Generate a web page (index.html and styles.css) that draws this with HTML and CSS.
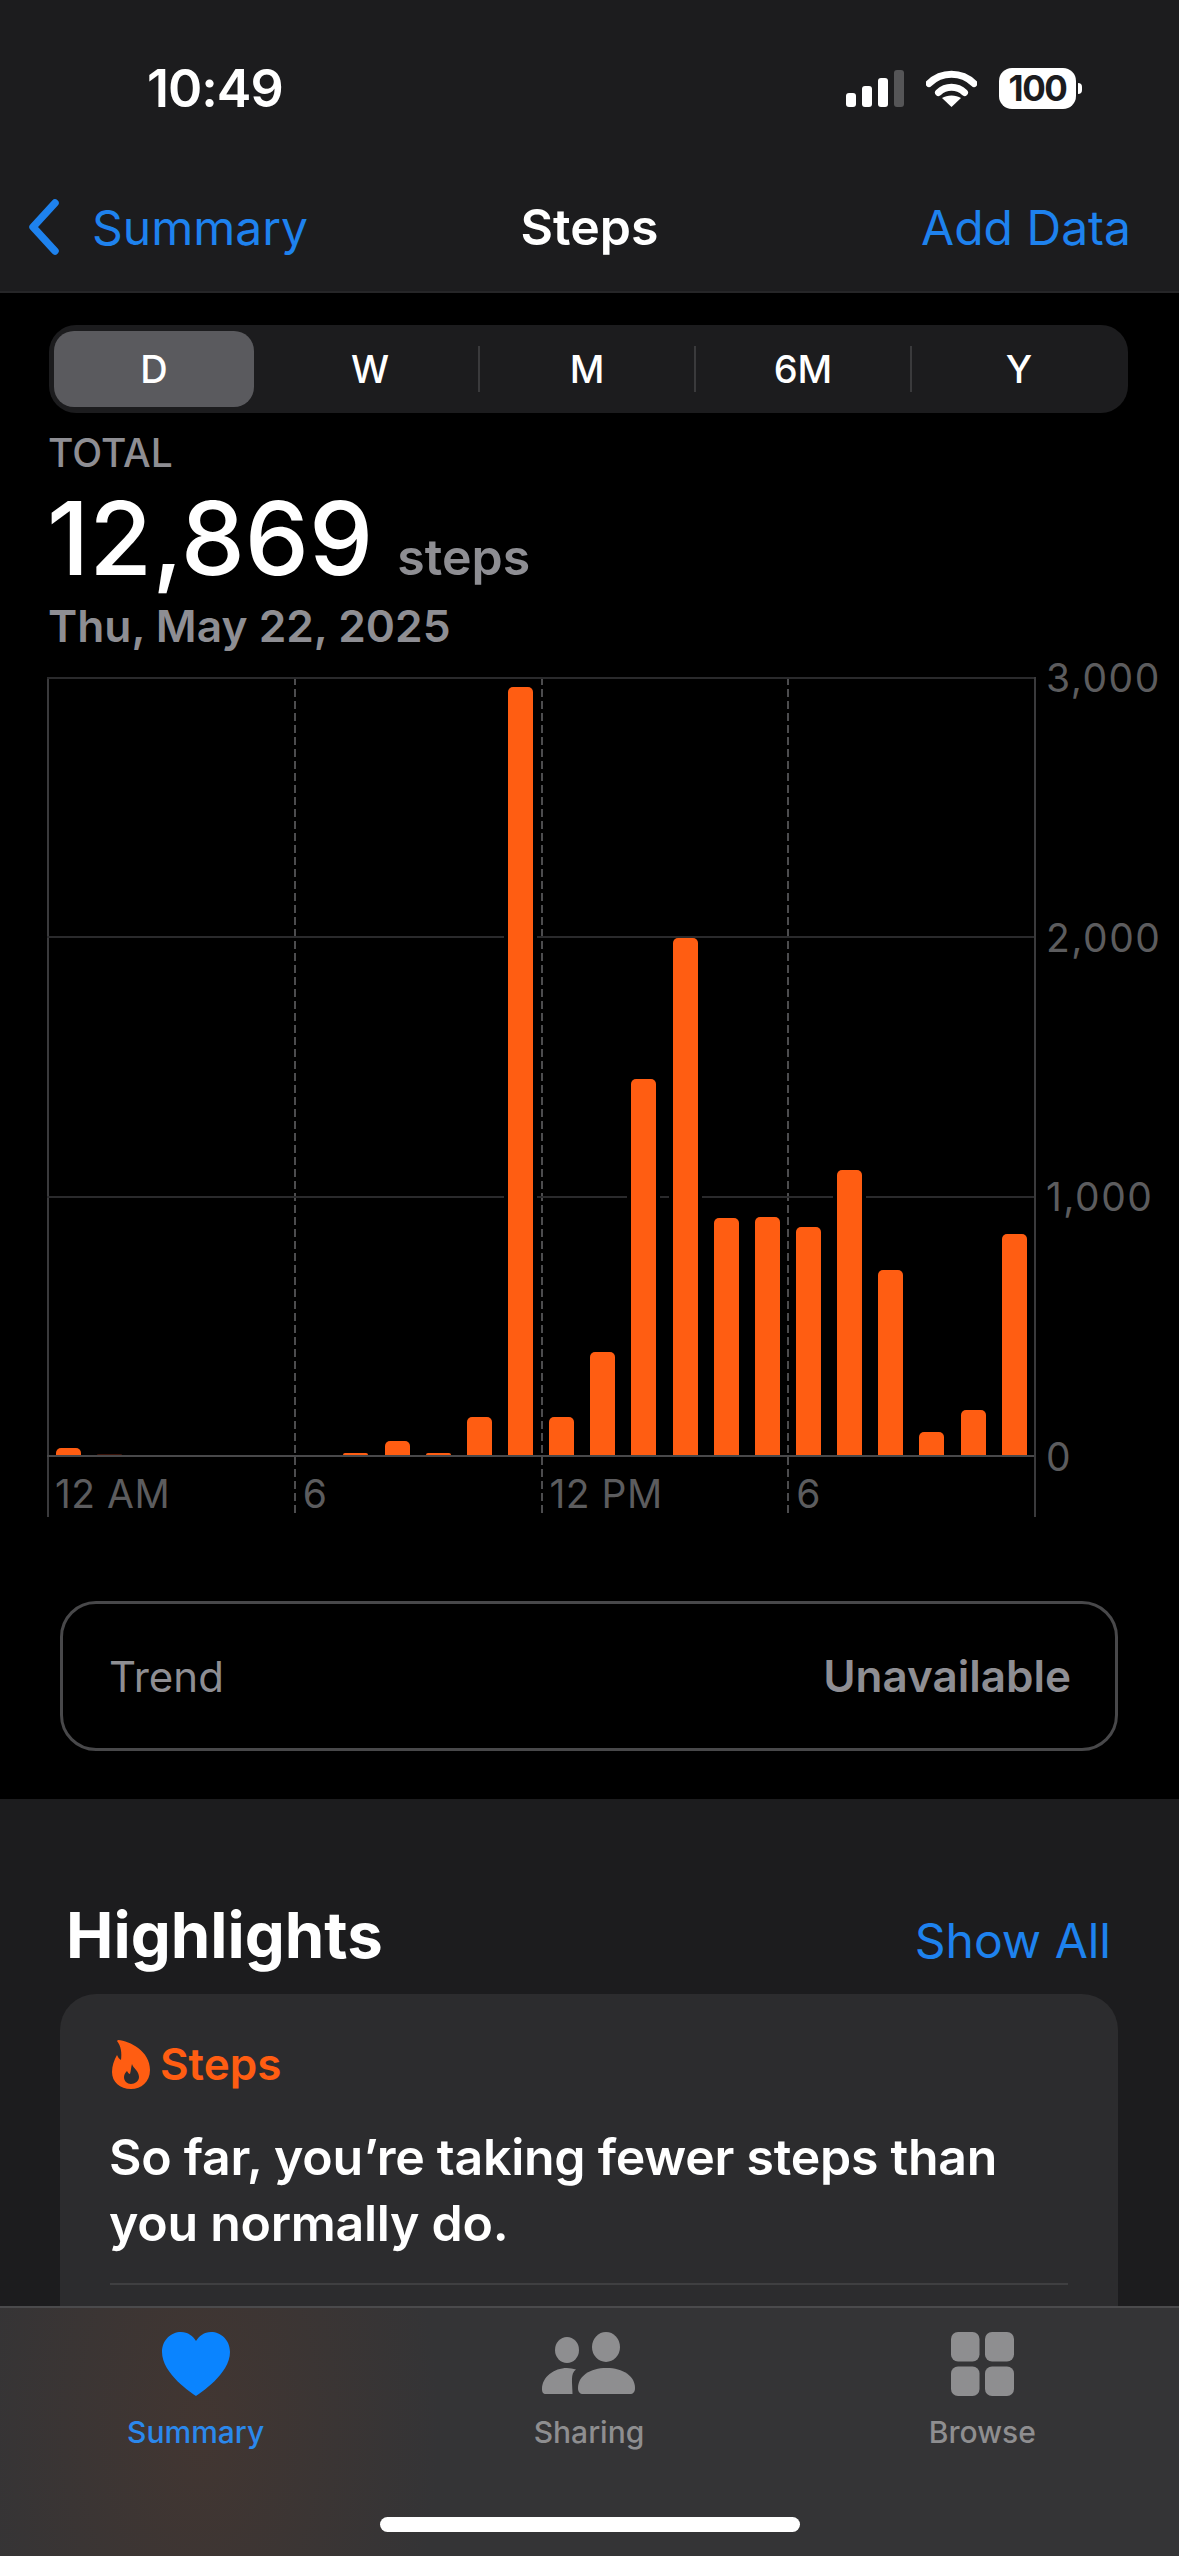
FILE: index.html
```html
<!DOCTYPE html>
<html lang="en">

<head>
  <meta charset="UTF-8">
  <meta name="viewport" content="width=device-width, initial-scale=1.0">
  <title>Steps</title>

  <link rel="stylesheet" href="styles.css">
</head>

<body>

  <div class="phone">

    <header class="header">
      <div class="statusbar">
        <span class="time">10:49</span>
        <div class="status-icons">
          <div class="signal">
            <i class="s1"></i><i class="s2"></i><i class="s3"></i><i class="s4"></i>
          </div>
          <svg class="wifi" width="51" height="37" viewBox="0 0 51 37">
            <path d="M3 13.5A32 32 0 0 1 48 13.5" fill="none" stroke="#fff" stroke-width="7" stroke-linecap="round" />
            <path d="M12.5 22.5A19 19 0 0 1 38.500 22.500" fill="none" stroke="#fff" stroke-width="7" stroke-linecap="round" />
            <path d="M25.500 37L16 28C21 24.500 30 24.500 35 28Z" fill="#fff" />
          </svg>
          <div class="battery">
            <span class="battery-level">100</span>
            <i class="battery-nub"></i>
          </div>
        </div>
      </div>
      <nav class="navbar">
        <a class="back">
          <svg width="32" height="58" viewBox="0 0 32 58">
            <path d="M27 5L5 29L27 53" fill="none" stroke="#1e82ee" stroke-width="7.500" stroke-linecap="round" stroke-linejoin="round" />
          </svg>
          <span>Summary</span>
        </a>
        <h1 class="nav-title">Steps</h1>
        <a class="nav-action">Add Data</a>
      </nav>
    </header>

    <main class="detail">
      <div class="segments">
        <div class="segment active">D</div>
        <div class="segment">W</div>
        <div class="segment split">M</div>
        <div class="segment split">6M</div>
        <div class="segment split">Y</div>
      </div>

      <div class="total-label">TOTAL</div>
      <div class="total">
        <span class="total-value">12,869</span>
        <span class="total-unit">steps</span>
      </div>
      <div class="total-date">Thu, May 22, 2025</div>

      <div class="chart">
        <div class="plot">
          <div class="columns">
            <div class="column first">12 AM</div>
            <div class="column">6</div>
            <div class="column">12 PM</div>
            <div class="column">6</div>
          </div>
          <div class="rows">
            <div class="row"></div>
            <div class="row"></div>
            <div class="row"></div>
          </div>
          <div class="bars">
            <div class="bar" style="height:7px"></div>
            <div class="bar faint" style="height:1px"></div>
            <div class="bar empty"></div>
            <div class="bar empty"></div>
            <div class="bar empty"></div>
            <div class="bar empty"></div>
            <div class="bar empty"></div>
            <div class="bar" style="height:2px"></div>
            <div class="bar" style="height:14px"></div>
            <div class="bar" style="height:2px"></div>
            <div class="bar" style="height:38px"></div>
            <div class="bar" style="height:768px"></div>
            <div class="bar" style="height:38px"></div>
            <div class="bar" style="height:103px"></div>
            <div class="bar" style="height:376px"></div>
            <div class="bar" style="height:517px"></div>
            <div class="bar" style="height:237px"></div>
            <div class="bar" style="height:238px"></div>
            <div class="bar" style="height:228px"></div>
            <div class="bar" style="height:285px"></div>
            <div class="bar" style="height:185px"></div>
            <div class="bar" style="height:23px"></div>
            <div class="bar" style="height:45px"></div>
            <div class="bar" style="height:221px"></div>
          </div>
        </div>
        <div class="y-axis">
          <span>3,000</span>
          <span>2,000</span>
          <span>1,000</span>
          <span>0</span>
        </div>
      </div>

      <div class="trend">
        <span class="trend-label">Trend</span>
        <span class="trend-value">Unavailable</span>
      </div>
    </main>

    <section class="highlights">
      <div class="highlights-head">
        <h2>Highlights</h2>
        <a class="show-all">Show All</a>
      </div>
      <div class="card">
        <div class="card-title">
          <svg width="38" height="49" viewBox="0 0 38 49">
            <path fill="#ff5d12" fill-rule="evenodd" d="M6 0C18 1 38 11 38 30C38 42 29 49 19 49C8 49 0 42 0 32C0 26 2 20 5 15C6 17 7 19 9 20C10 13 9 6 5 1ZM20 24C21 28 27 31 27 37C27 41 23 44 19 44C15 44 12 41 12 37C12 34 14 32 15 31C16 33 17 34 18 34C19 31 19 27 20 24Z" />
          </svg>
          <span>Steps</span>
        </div>
        <p class="card-text">So far, you’re taking fewer steps than you normally do.</p>
        <div class="card-line"></div>
      </div>
    </section>

    <footer class="tabbar">
      <div class="tabs">
        <div class="tab active">
          <svg width="68" height="64" viewBox="0 0 68 64">
            <path fill="#0a84ff" d="M34 64C30 61 0 42 0 20C0 8 9 0 19 0C26 0 31 4 34 9C37 4 42 0 49 0C59 0 68 8 68 20C68 42 38 61 34 64Z" />
          </svg>
          <span>Summary</span>
        </div>
        <div class="tab">
          <svg width="93" height="64" viewBox="0 0 93 64">
            <g fill="#8e8e90">
              <ellipse cx="64" cy="15" rx="14" ry="15" />
              <ellipse cx="25" cy="18" rx="12" ry="13" />
              <path d="M36 56C36 44 48 36 64.500 36C81 36 93 44 93 56C93 60 91 62 88 62H41C38 62 36 60 36 56Z" />
              <path d="M0 57C0 45 12 36 25 36C28 36 31 36.500 34 37.500C28 42 30.500 50 30.500 62H4C1 62 0 60 0 57Z" />
            </g>
          </svg>
          <span>Sharing</span>
        </div>
        <div class="tab">
          <svg width="63" height="64" viewBox="0 0 63 64">
            <g fill="#8e8e90">
              <rect x="0" y="0" width="28.500" height="29.500" rx="7" />
              <rect x="34" y="0" width="29" height="29.500" rx="7" />
              <rect x="0" y="34.500" width="28.500" height="29.500" rx="7" />
              <rect x="34" y="34.500" width="29" height="29.500" rx="7" />
            </g>
          </svg>
          <span>Browse</span>
        </div>
      </div>
      <div class="home-indicator"></div>
    </footer>

  </div>

</body>

</html>
```

FILE: styles.css
```css
* {
  box-sizing: border-box;
}

body {
  margin: 0;
  background-color: #000;
  color: #fff;
  font-family: Inter, "Noto Sans", sans-serif;
}

h1,
h2,
p {
  margin: 0;
}

.phone {
  position: relative;
  width: 1179px;
  height: 2556px;
  overflow: hidden;
}

/* top bars */
.header {
  height: 293px;
  background-color: #1c1c1e;
  border-bottom: 2px solid #262628;
}

.statusbar {
  display: flex;
  justify-content: space-between;
  align-items: center;
  height: 176px;
  padding: 0 97px 0 147px;
}

.time {
  font-size: 52px;
  font-weight: 600;
  letter-spacing: -1px;
}

.status-icons {
  display: flex;
  align-items: center;
  gap: 22px;
}

.signal {
  display: flex;
  align-items: flex-end;
  gap: 6px;
  height: 37px;
}

.signal i {
  width: 10px;
  border-radius: 3px;
  background-color: #fff;
}

.signal .s1 {
  height: 14px;
}

.signal .s2 {
  height: 21px;
}

.signal .s3 {
  height: 29px;
}

.signal .s4 {
  height: 37px;
  background-color: #555557;
}

.battery {
  position: relative;
  width: 77px;
  height: 41px;
  margin-right: 6px;
  border-radius: 13px;
  background-color: #fff;
  color: #1c1c1e;
  font-size: 35px;
  font-weight: 700;
  line-height: 41px;
  text-align: center;
  letter-spacing: -1.5px;
}

.battery-nub {
  position: absolute;
  top: 15px;
  left: 79px;
  width: 4px;
  height: 11px;
  border-radius: 0 5px 5px 0;
  background-color: #fff;
}

.navbar {
  display: flex;
  justify-content: space-between;
  align-items: center;
  position: relative;
  height: 102px;
  padding: 0 48px 0 28px;
  font-size: 48px;
  color: #1e82ee;
}

.back {
  display: flex;
  align-items: center;
  gap: 32px;
}

.nav-title {
  position: absolute;
  left: 0;
  right: 0;
  text-align: center;
  font-size: 50px;
  font-weight: 600;
  color: #fff;
}

/* chart area */
.detail {
  padding: 32px 0 48px 0;
  background-color: #000;
}

.segments {
  display: grid;
  grid-template-columns: 208px repeat(4, 216px);
  align-items: center;
  width: 1079px;
  height: 88px;
  margin-left: 49px;
  padding-left: 5px;
  border-radius: 27px;
  background-color: #1c1c1e;
  font-size: 38px;
  font-weight: 500;
}

.segment {
  height: 46px;
  line-height: 46px;
  text-align: center;
}

.segment.active {
  width: 200px;
  height: 76px;
  line-height: 76px;
  border-radius: 20px;
  background-color: #5a5a5e;
}

.segment.split {
  border-left: 2px solid #3a3a3c;
}

.total-label {
  margin: 20px 0 0 48px;
  font-size: 39px;
  font-weight: 500;
  line-height: 40px;
  color: #8e8e93;
}

.total {
  display: flex;
  align-items: baseline;
  gap: 24px;
  height: 110px;
  margin: 10px 0 0 47px;
  line-height: 110px;
}

.total-value {
  font-size: 102px;
  font-weight: 500;
}

.total-unit {
  font-size: 50px;
  font-weight: 600;
  color: #8e8e93;
}

.total-date {
  margin: 8px 0 0 48px;
  font-size: 44.3px;
  font-weight: 600;
  line-height: 50px;
  color: #8e8e93;
}

.chart {
  display: flex;
  gap: 10px;
  margin: 26px 0 0 47px;
}

.plot {
  display: grid;
  width: 989px;
  height: 840px;
  border-right: 2px solid #3a3a3c;
}

.columns,
.rows,
.bars {
  grid-area: 1 / 1;
}

.columns {
  display: grid;
  grid-template-columns: repeat(4, 1fr);
}

.column {
  display: flex;
  align-items: flex-end;
  padding-left: 9px;
  font-size: 39px;
  line-height: 46px;
  letter-spacing: 0.5px;
  color: #5c5c5e;
  background-image: repeating-linear-gradient(to bottom, #4c4c4e 0, #4c4c4e 8px, transparent 8px, transparent 12px);
  background-size: 2px 100%;
  background-repeat: no-repeat;
}

.column.first {
  padding-left: 6px;
  background-image: none;
  border-left: 2px solid #3a3a3c;
}

.rows {
  display: flex;
  flex-direction: column;
  height: 780px;
  border-bottom: 2px solid #48484a;
}

.row {
  flex: 1;
  border-top: 2px solid #2a2a2c;
}

.bars {
  display: flex;
  align-items: flex-end;
  gap: 16.15px;
  height: 778px;
  padding-left: 8.5px;
}

.bar {
  flex: none;
  width: 25px;
  border-radius: 5px 5px 0 0;
  background-color: #ff5d12;
  box-shadow: 4px 0 #000, -4px 0 #000;
}

.bar.faint {
  background-color: #3a1208;
}

.bar.empty {
  box-shadow: none;
  background-color: transparent;
}

.y-axis {
  display: flex;
  flex-direction: column;
  justify-content: space-between;
  height: 780px;
  font-size: 39px;
  letter-spacing: 1.5px;
  color: #5c5c5e;
}

.y-axis span {
  height: 0;
  line-height: 0;
  margin-top: 1px;
}

.trend {
  display: flex;
  justify-content: space-between;
  align-items: center;
  width: 1058px;
  height: 150px;
  margin: 84px 0 0 60px;
  padding: 0 44px 0 46px;
  border: 3px solid #48484a;
  border-radius: 36px;
  font-size: 44px;
  color: #8e8e93;
}

.trend-label {
  font-size: 42px;
}

.trend-value {
  font-weight: 600;
}

/* highlights */
.highlights {
  padding-top: 96px;
  background-color: #1c1c1e;
}

.highlights-head {
  display: flex;
  justify-content: space-between;
  align-items: baseline;
  height: 80px;
  padding: 0 68px 0 66px;
  line-height: 80px;
}

.highlights-head h2 {
  font-size: 63.5px;
  font-weight: 700;
}

.show-all {
  font-size: 48px;
  color: #1e82ee;
}

.card {
  width: 1058px;
  margin: 19px 0 0 60px;
  padding: 45px 50px 80px 50px;
  border-radius: 36px;
  background-color: #2c2c2e;
}

.card-title {
  display: flex;
  align-items: center;
  gap: 10px;
  height: 50px;
  padding-left: 2px;
  font-size: 44px;
  font-weight: 600;
  color: #ff5d12;
}

.card-text {
  margin: 35px 0 0 -1px;
  font-size: 50px;
  font-weight: 600;
  line-height: 66px;
  letter-spacing: -0.25px;
}

.card-line {
  height: 2px;
  margin-top: 27px;
  background-color: #3f3f41;
}

/* tab bar, sits over the scrolled content */
.tabbar {
  position: absolute;
  left: 0;
  right: 0;
  bottom: 0;
  height: 250px;
  padding-top: 24px;
  border-top: 2px solid #4a4a4c;
  background-color: #343436;
  background-image: radial-gradient(ellipse 240px 420px at 200px 120px, rgba(110, 60, 35, 0.24), rgba(110, 60, 35, 0));
}

.tabs {
  display: grid;
  grid-template-columns: repeat(3, 1fr);
  margin-left: -1px;
}

.tab {
  display: flex;
  flex-direction: column;
  align-items: center;
  font-size: 30px;
  font-weight: 500;
  line-height: 40px;
  color: #8e8e90;
}

.tab span {
  margin-top: 16px;
}

.tab.active {
  color: #2b88ec;
}

.home-indicator {
  width: 420px;
  height: 15px;
  margin: 65px auto 0 auto;
  border-radius: 8px;
  background-color: #fff;
}
```
